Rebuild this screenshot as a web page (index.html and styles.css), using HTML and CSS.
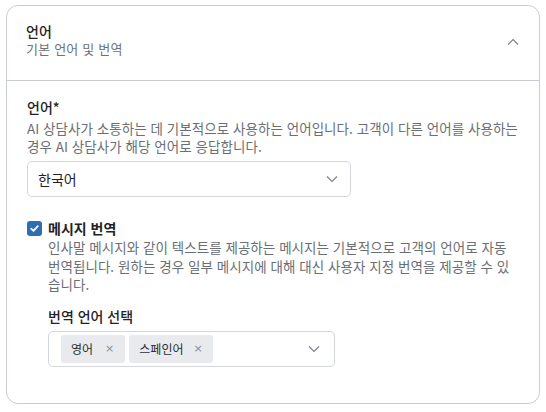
FILE: index.html
```html
<!DOCTYPE html>
<html lang="ko">
<head>
<meta charset="utf-8">
<link rel="stylesheet" href="styles.css">
</head>
<body>
<div class="card">
  <div class="card-header">
    <div class="head-text">
      <div class="title">언어</div>
      <div class="subtitle">기본 언어 및 번역</div>
    </div>
    <svg class="chev-up" width="12" height="8" viewBox="0 0 12 8"><polyline points="1,6.5 6,1.5 11,6.5" fill="none" stroke="#7d828a" stroke-width="1.2"/></svg>
  </div>
  <div class="card-body">
    <div class="field-label">언어*</div>
    <div class="desc">AI 상담사가 소통하는 데 기본적으로 사용하는 언어입니다. 고객이 다른 언어를 사용하는 경우 AI 상담사가 해당 언어로 응답합니다.</div>
    <div class="select">
      <span class="select-value">한국어</span>
      <svg class="chev" width="12" height="8" viewBox="0 0 12 8"><polyline points="1,1.5 6,6.5 11,1.5" fill="none" stroke="#7d828a" stroke-width="1.2"/></svg>
    </div>
    <div class="check-row">
      <span class="checkbox"><svg width="15" height="15" viewBox="0 0 15 15"><polyline points="4.2,7.6 6.5,9.8 10.8,5.2" fill="none" stroke="#fff" stroke-width="1.8" stroke-linecap="round" stroke-linejoin="round"/></svg></span>
      <div class="check-content">
        <div class="check-label">메시지 번역</div>
        <div class="desc">인사말 메시지와 같이 텍스트를 제공하는 메시지는 기본적으로 고객의 언어로 자동 번역됩니다. 원하는 경우 일부 메시지에 대해 대신 사용자 지정 번역을 제공할 수 있습니다.</div>
        <div class="sub-label">번역 언어 선택</div>
        <div class="multi">
          <div class="tags">
            <span class="tag">영어<span class="x">×</span></span>
            <span class="tag">스페인어<span class="x">×</span></span>
          </div>
          <svg class="chev" width="12" height="8" viewBox="0 0 12 8"><polyline points="1,1.5 6,6.5 11,1.5" fill="none" stroke="#7d828a" stroke-width="1.2"/></svg>
        </div>
      </div>
    </div>
  </div>
</div>
</body>
</html>
```
FILE: styles.css
```css
* { box-sizing: border-box; }
body {
  margin: 0;
  padding: 5px 6px;
  background: #fff;
  font-family: "Noto Sans CJK KR", "Noto Sans", sans-serif;
  color: #1f2226;
}
.card {
  width: 534px;
  height: 399px;
  border: 1px solid #c9cdd2;
  border-radius: 12px;
  overflow: hidden;
}
.card-header {
  display: flex;
  align-items: center;
  justify-content: space-between;
  padding: 16px 20px 22px 19px;
  border-bottom: 1px solid #c9cdd2;
}
.title {
  font-size: 14px;
  line-height: 18px;
  font-weight: 500;
}
.subtitle {
  font-size: 13px;
  line-height: 18px;
  color: #6d7178;
  letter-spacing: 0.2px;
}
.chev-up { margin-top: 4px; }
.card-body {
  padding: 17px 18px 0 20px;
}
.field-label {
  font-size: 14px;
  line-height: 18px;
  font-weight: 500;
}
.desc {
  font-size: 13.5px;
  line-height: 18px;
  letter-spacing: 0.05px;
  color: #6a6e75;
  margin-top: 3px;
}
.select {
  margin-top: 6px;
  width: 324px;
  height: 36px;
  border: 1px solid #d3d6da;
  border-radius: 5px;
  display: flex;
  align-items: center;
  justify-content: space-between;
  padding: 0 12px 0 10px;
  font-size: 14px;
}
.check-row {
  display: flex;
  gap: 6px;
  margin-top: 22px;
}
.checkbox {
  flex: none;
  width: 15px;
  height: 15px;
  margin-top: 2px;
  border-radius: 3px;
  background: #2e6db4;
  display: flex;
}
.check-content { flex: 1; }
.check-label {
  font-size: 14px;
  line-height: 18px;
  font-weight: 700;
}
.check-content .desc { margin-top: 1px; line-height: 18.5px; }
.sub-label {
  margin-top: 13px;
  font-size: 14px;
  line-height: 18px;
  font-weight: 500;
}
.multi {
  margin-top: 6px;
  width: 287px;
  height: 36px;
  border: 1px solid #d3d6da;
  border-radius: 5px;
  display: flex;
  align-items: center;
  justify-content: space-between;
  padding: 0 14px 0 12px;
}
.tags { display: flex; gap: 4px; }
.tag {
  height: 28px;
  background: #e8eaed;
  border-radius: 3px;
  display: flex;
  align-items: center;
  padding: 0 11px 0 10px;
  font-size: 12px;
  color: #2a2d31;
}
.tag + .tag { padding-right: 10px; }
.tag + .tag .x { margin-left: 10px; }
.x {
  margin-left: 12px;
  color: #8a8e94;
  font-family: "DejaVu Sans", sans-serif;
  font-size: 11px;
}
```
